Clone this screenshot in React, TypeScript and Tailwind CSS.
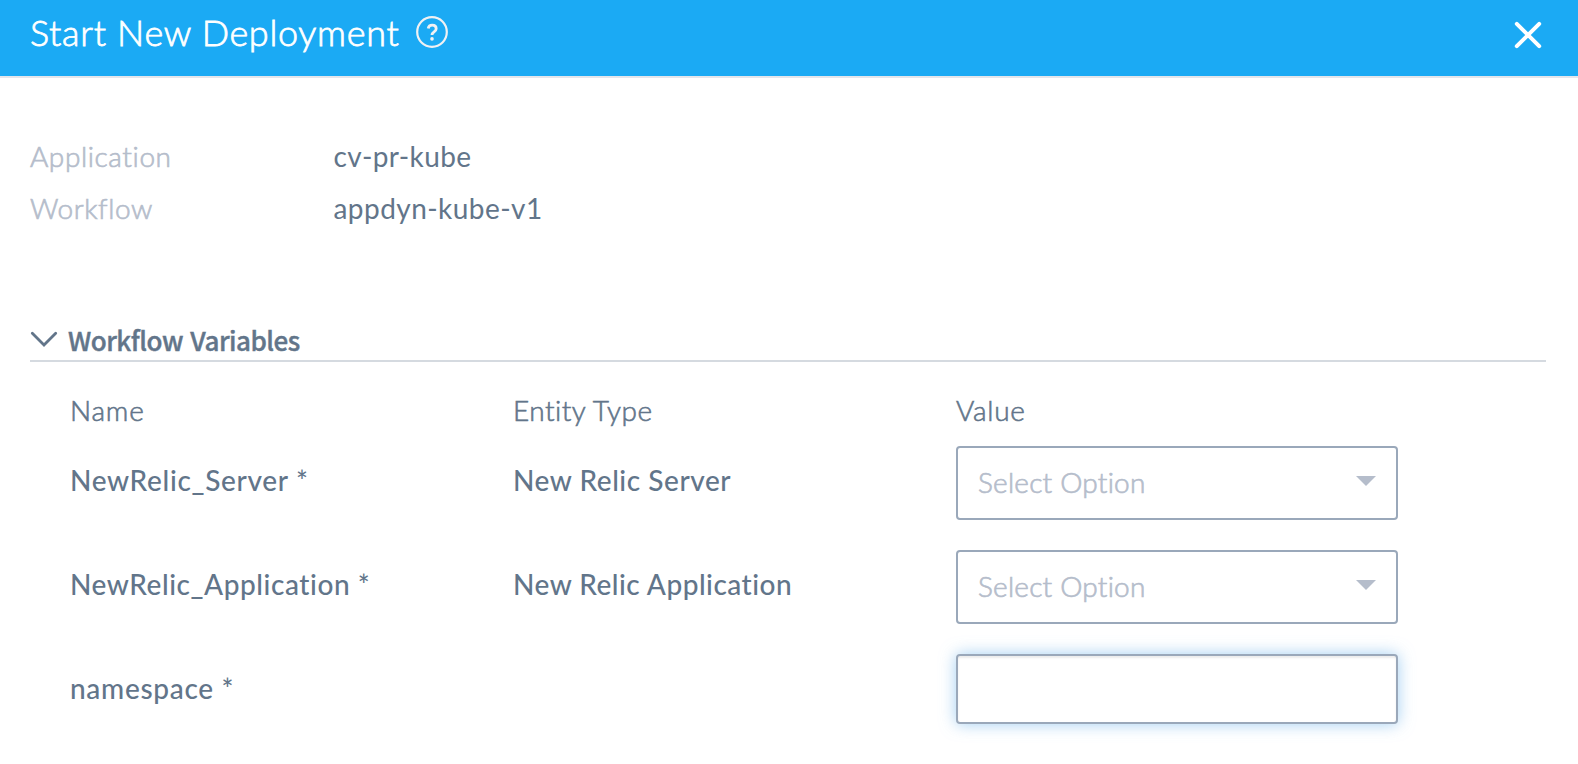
type Variable = {
  name: string;
  nameClass: string;
  type?: string;
  typeClass?: string;
};

const variables: Variable[] = [
  {
    name: "NewRelic_Server *",
    nameClass: "tracking-[0.69px]",
    type: "New Relic Server",
    typeClass: "tracking-[0.55px]",
  },
  {
    name: "NewRelic_Application *",
    nameClass: "tracking-[0.57px]",
    type: "New Relic Application",
    typeClass: "tracking-[0.5px]",
  },
  { name: "namespace *", nameClass: "tracking-[0.7px]" },
];

function Header() {
  return (
    <header className="flex h-[78px] items-start border-b-2 border-[#e4e6ec] bg-[#1baaf4] pl-[30px] pr-[36px] text-white">
      <h1 className="w-[386px] whitespace-nowrap text-[36px] font-light leading-[64px] tracking-[0.68px] [-webkit-text-stroke:0.8px]">
        Start New Deployment
      </h1>
      <button aria-label="Help" className="mt-4">
        <svg width="32" height="32" viewBox="0 0 32 32" fill="none" stroke="#f0f1f3">
          <circle cx="16" cy="16" r="14.8" strokeWidth="2.2" />
          <path
            d="M12.2 12.4c.4-2.1 1.9-3.2 4-3.2 2.3 0 4 1.3 4 3.5 0 3.2-4.2 3.1-4.2 6.2"
            strokeWidth="2.8"
          />
          <circle cx="16" cy="22.9" r="1.8" fill="#f0f1f3" stroke="none" />
        </svg>
      </button>
      <button aria-label="Close" className="ml-auto mt-[21px]">
        <svg width="28" height="28" viewBox="0 0 28 28" fill="none" stroke="#fff" strokeWidth="4" strokeLinecap="round">
          <path d="M2.8 2.8L25.2 25.2M25.2 2.8L2.8 25.2" />
        </svg>
      </button>
    </header>
  );
}

function SelectBox() {
  return (
    <div className="flex h-[74px] w-[442px] items-start justify-between rounded-[4px] border-2 border-[#9aa8ba] bg-white pl-5 pr-5">
      <span className="font-light leading-[68px] tracking-[0.23px] text-[#b5bdcb] [-webkit-text-stroke:0.7px]">
        Select Option
      </span>
      <svg className="mt-7" width="20" height="10" viewBox="0 0 20 10" fill="#b5bdcb">
        <path d="M0 0H20L10 10Z" />
      </svg>
    </div>
  );
}

export default function App() {
  return (
    <div className="h-[764px] w-full overflow-hidden bg-white font-['Lato','Noto_Sans',sans-serif] text-[28px] text-[#62758a] [font-variant-ligatures:none]">
      <Header />
      <dl className="mt-[52px] grid grid-cols-[303.5px_1fr] pl-[30px] leading-[52px]">
        <dt className="font-light tracking-[0.6px] text-[#b5bdcb] [-webkit-text-stroke:0.7px]">Application</dt>
        <dd className="tracking-[0.36px]">cv-pr-kube</dd>
        <dt className="font-light tracking-[0.55px] text-[#b5bdcb] [-webkit-text-stroke:0.7px]">Workflow</dt>
        <dd className="tracking-[0.45px]">appdyn-kube-v1</dd>
      </dl>
      <section className="ml-[30px] mr-[32px] mt-[85px]">
        <div className="flex h-[43px] items-start border-b-2 border-[#d5dae0]">
          <svg className="mt-3" width="28" height="18" viewBox="0 0 28 18" fill="none" stroke="#62758a" strokeWidth="2.8" strokeLinecap="round">
            <path d="M2.3 2.3L14 14L25.7 2.3" />
          </svg>
          <h2 className="ml-[10px] font-['Noto_Sans_CJK_SC',sans-serif] text-[26px] font-medium leading-[42px] tracking-[-0.5px] [word-spacing:2px] [-webkit-text-stroke:0.4px]">
            Workflow Variables
          </h2>
        </div>
        <div className="mt-[21px] pl-10">
          <div className="grid h-[63px] grid-cols-[443px_443px_1fr] font-light leading-[54px] [-webkit-text-stroke:0.6px]">
            <span className="tracking-[0.8px]">Name</span>
            <span className="tracking-[0.48px]">Entity Type</span>
            <span className="tracking-[0.7px]">Value</span>
          </div>
          <div className="flex flex-col gap-[30px]">
            {variables.map((v) => (
              <div key={v.name} className="grid h-[74px] grid-cols-[443px_443px_1fr] font-medium leading-[68px]">
                <span className={v.nameClass}>{v.name}</span>
                <span className={v.typeClass}>{v.type}</span>
                {v.type ? (
                  <SelectBox />
                ) : (
                  <input
                    aria-label="namespace"
                    className="h-[70px] w-[442px] rounded-[4px] border-2 border-[#9aa8ba] bg-white px-5 shadow-[inset_0_2px_2px_rgba(0,0,0,0.075),0_0_16px_rgba(102,175,233,0.6)] outline-none"
                  />
                )}
              </div>
            ))}
          </div>
        </div>
      </section>
    </div>
  );
}
